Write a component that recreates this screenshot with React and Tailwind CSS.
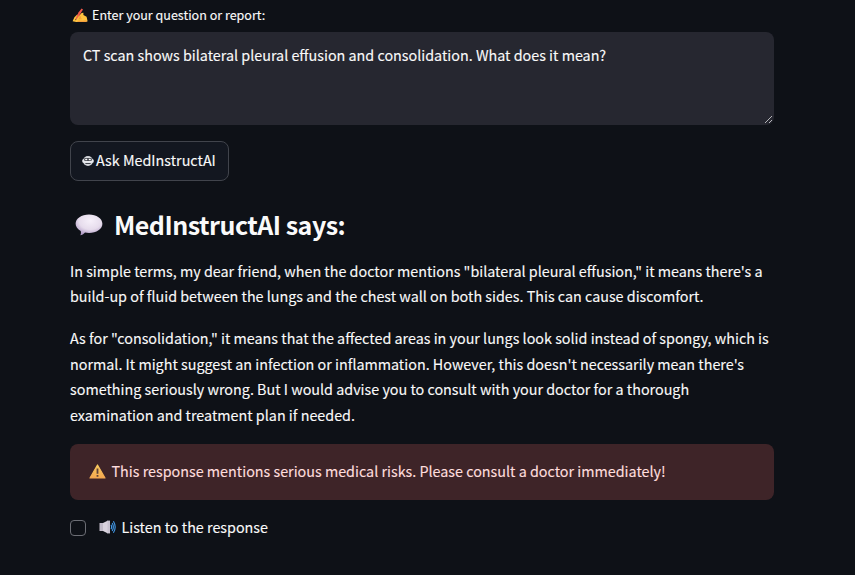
import React from 'react';

function WritingHand() {
  return (
    <svg className="h-[15px] w-[16px] shrink-0" viewBox="0 0 16 15">
      <path d="M0.6 13.2 2.4 9.2 5.2 6.6 7.3 7.6 9.6 5 11.4 4.8 11.4 7 14.6 8.8 15.6 13.2 13.6 14H4.2Z" fill="#fdc33f" />
      <path d="M4.6 14 7 12.4 10.6 12.8 13.8 12.2 15.4 13.2 13.4 14Z" fill="#f5a03c" />
      <path d="M3.6 10.8 6.6 4.2 9.6 0.5 11 1.5 8.4 5.8 4.6 11.2Z" fill="#f0584a" />
      <path d="M3.6 10.8 2.9 12.4 4.6 11.2Z" fill="#5b2c28" />
      <path d="M4.8 8.600 8.800 9 6.800 10.800 9.600 10.800" fill="none" stroke="#e9832d" strokeWidth=".6" />
    </svg>
  );
}

function RobotFace() {
  return (
    <svg className="h-[12px] w-[12px] shrink-0" viewBox="0 0 12 12">
      <circle cx="6" cy="6" r="5" fill="#d3d5da" />
      <rect x="0.3" y="4.200" width="11.4" height="3.600" rx="1.2" fill="#e8e9ee" />
      <rect x="2.2" y="3" width="7.6" height="3" rx="1" fill="#41444c" />
      <rect x="3.2" y="3.800" width="2" height="1.400" fill="#fff" />
      <rect x="6.8" y="3.800" width="2" height="1.400" fill="#fff" />
      <rect x="3.4" y="8" width="5.2" height="1" fill="#41444c" />
    </svg>
  );
}

function SpeechBalloon() {
  return (
    <svg className="mt-[2px] h-[22px] w-[28px] shrink-0" viewBox="0 0 28 22">
      <defs>
        <radialGradient id="balloon" cx=".55" cy=".3" r=".7">
          <stop offset="0" stopColor="#f6f0fa" />
          <stop offset=".6" stopColor="#e6dcec" />
          <stop offset="1" stopColor="#b09ac6" />
        </radialGradient>
      </defs>
      <path d="M14 .5C21.5.5 27.4 4.5 27.4 9.8S21.500 19 14 19C12.600 19 11.300 18.900 10 18.600 8.700 20.200 6.800 21.300 5.300 21.300 6 20 6.200 18.500 5.700 17C2.600 15.300.600 12.700.600 9.800.600 4.500 6.500.500 14 .500Z" fill="url(#balloon)" />
    </svg>
  );
}

function Warning() {
  return (
    <svg className="mt-[1px] h-[15px] w-[17px] shrink-0" viewBox="0 0 17 15">
      <defs>
        <linearGradient id="warn" x1="0" y1="0" x2="0" y2="1">
          <stop offset="0" stopColor="#f8c95e" />
          <stop offset="1" stopColor="#f5a850" />
        </linearGradient>
      </defs>
      <path d="M8.500 1 16 14H1Z" fill="url(#warn)" stroke="url(#warn)" strokeWidth="1.200" strokeLinejoin="round" />
      <path d="M7.600 4.500h1.800v5.300H7.600ZM7.600 11h1.800v1.800H7.600Z" fill="#5f4238" />
    </svg>
  );
}

function Speaker() {
  return (
    <svg className="h-[14px] w-[17px] shrink-0" viewBox="0 0 17 14">
      <path d="M.500 3H5V11H.500Z" fill="#c0bac8" />
      <path d="M4 3 9 .600V13.400L4 11Z" fill="#d8d2dd" />
      <path d="M8.500.600h2.500v12.800H8.500Z" fill="#c8c2d0" />
      <path d="M12 4.800Q13.200 7 12 9.200M13.200 3Q15.500 7 13.200 11M14.400 1.300Q18 7 14.400 12.700" fill="none" stroke="#439bea" strokeWidth="1.100" />
    </svg>
  );
}

const first = [
  'In simple terms, my dear friend, when the doctor mentions "bilateral pleural effusion," it means there\'s a',
  'build-up of fluid between the lungs and the chest wall on both sides. This can cause discomfort.',
];
const second = [
  'As for "consolidation," it means that the affected areas in your lungs look solid instead of spongy, which is',
  "normal. It might suggest an infection or inflammation. However, this doesn't necessarily mean there's",
  'something seriously wrong. But I would advise you to consult with your doctor for a thorough',
  'examination and treatment plan if needed.',
];

function Paragraph({ lines }) {
  return (
    <p className="mb-4 leading-[25.6px]">
      {lines.map((line) => (
        <span key={line} className="block whitespace-nowrap">{line}</span>
      ))}
    </p>
  );
}

export default function App() {
  return (
    <div className="h-[575px] w-[855px] overflow-hidden bg-[#0e1117] pl-[70px] font-['Noto_Sans_CJK_SC',sans-serif] text-[14.33px] text-[#fafafa] [-webkit-text-stroke:0.12px]">
      <main className="flex w-[704px] flex-col pt-[3px]">
        <label className="flex h-[24px] items-center gap-[4px] pl-[2px] text-[12.54px] leading-[24px]">
          <WritingHand />
          <span>Enter your question or report:</span>
        </label>
        <div className="mt-[5px] flex h-[93px] items-start rounded-lg bg-[#262730] pt-[10px] pl-[13px]">
          <span className="flex-1 leading-[25.6px] whitespace-nowrap">CT scan shows bilateral pleural effusion and consolidation. What does it mean?</span>
          <svg className="mr-[1px] mb-[1px] size-[9px] self-end" viewBox="0 0 9 9">
            <path d="M1 8 8 1M5 8 8 5" stroke="#b5b5ba" strokeWidth="1" />
          </svg>
        </div>
        <button className="mt-4 flex h-[40px] w-[159px] items-center gap-[2px] rounded-lg border border-[#41444c] bg-[#131720] pl-[11px]">
          <RobotFace />
          <span className="pb-[2px] whitespace-nowrap">Ask MedInstructAI</span>
        </button>
        <h2 className="mt-[26px] flex h-[34px] items-center gap-[11px] pl-[5px] text-[25px] leading-[34px] font-bold tracking-[-0.5px] [-webkit-text-stroke:0]">
          <SpeechBalloon />
          <span className="whitespace-nowrap">MedInstructAI says:</span>
        </h2>
        <div className="mt-[16.8px]">
          <Paragraph lines={first} />
          <Paragraph lines={second} />
        </div>
        <div className="mt-[0.6px] flex h-[56px] items-center gap-[6px] rounded-lg bg-[#3e2428] pb-[2px] pl-[18.5px] text-[#ffdede]">
          <Warning />
          <span className="whitespace-nowrap">This response mentions serious medical risks. Please consult a doctor immediately!</span>
        </div>
        <label className="mt-4 flex h-[24px] items-center">
          <span className="size-4 rounded border border-[#6c6e75]" />
          <span className="ml-[12.5px] flex items-center gap-[6px] pb-[2px]">
            <Speaker />
            <span className="whitespace-nowrap">Listen to the response</span>
          </span>
        </label>
      </main>
    </div>
  );
}
